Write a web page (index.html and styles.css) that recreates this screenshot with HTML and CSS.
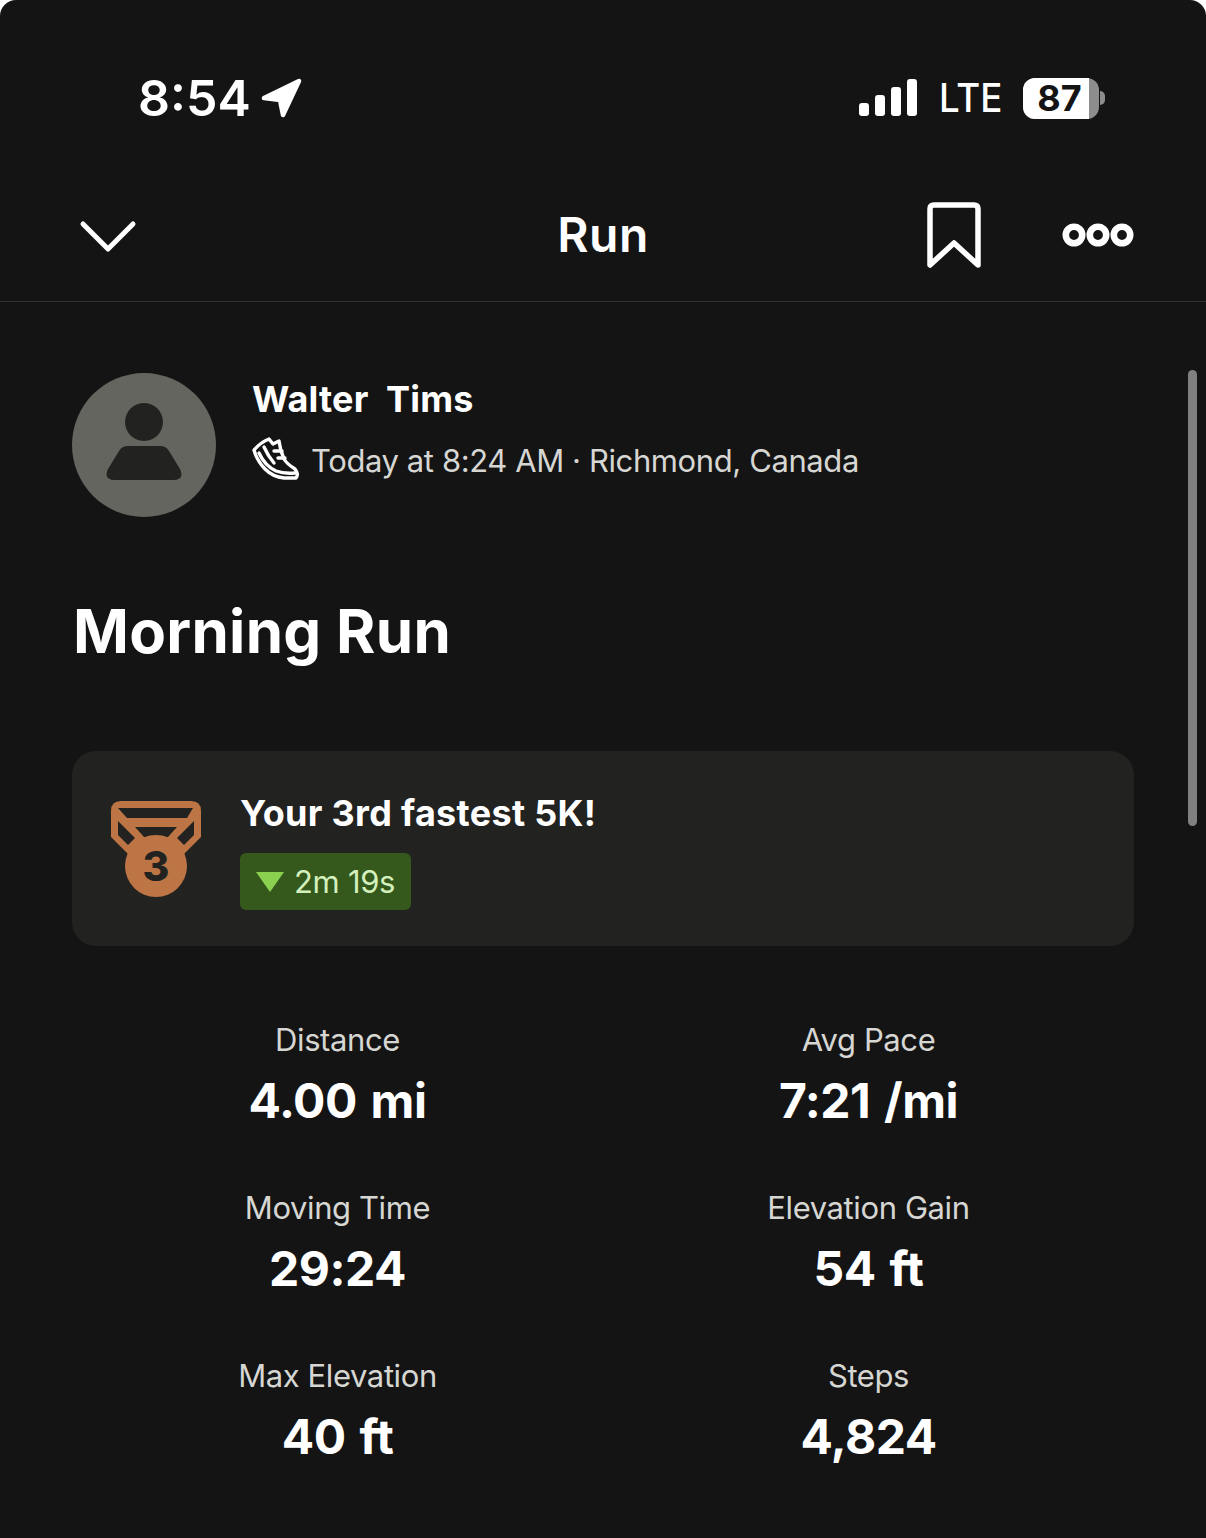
FILE: index.html
```html
<!DOCTYPE html>
<html lang="en">
<head>
<meta charset="utf-8">
<title>Run</title>
<link rel="stylesheet" href="styles.css">
</head>
<body>
<div class="phone">
  <header class="status">
    <div class="status-left">
      <span class="clock">8:54</span>
      <svg class="loc" width="42" height="40" viewBox="0 0 42 40"><path d="M3 20 38 3 22 37 19 22Z" fill="#fff" stroke="#fff" stroke-width="4.5" stroke-linejoin="round"/></svg>
    </div>
    <div class="status-right">
      <div class="signal"><i class="s1"></i><i class="s2"></i><i class="s3"></i><i class="s4"></i></div>
      <span class="lte">LTE</span>
      <div class="battery">
        <div class="batt-body"><span class="batt-num">87</span></div>
        <span class="batt-cap"></span>
      </div>
    </div>
  </header>
  <nav class="nav">
    <svg class="chev" width="58" height="34" viewBox="0 0 58 34"><path d="M4 4 29 29 54 4" fill="none" stroke="#fff" stroke-width="5" stroke-linecap="round" stroke-linejoin="round"/></svg>
    <h1 class="nav-title">Run</h1>
    <div class="nav-actions">
      <svg class="mark" width="54" height="66" viewBox="0 0 54 66"><path d="M3 63V7Q3 3 7 3H47Q51 3 51 7V63L27 41Z" fill="none" stroke="#fff" stroke-width="5.5" stroke-linejoin="round"/></svg>
      <svg class="more" width="72" height="24" viewBox="0 0 72 24"><g fill="none" stroke="#fff" stroke-width="6.6"><circle cx="12" cy="12" r="8.2"/><circle cx="36" cy="12" r="8.2"/><circle cx="60" cy="12" r="8.2"/></g></svg>
    </div>
  </nav>
  <main class="content">
    <section class="profile">
      <div class="avatar">
        <svg width="76" height="78" viewBox="0 0 76 78"><circle cx="38" cy="19" r="19" fill="#222220"/><path d="M22 43H54Q60 43 63 48L74 66Q79 77 67 77H9Q-3 77 2 66L13 48Q16 43 22 43Z" fill="#222220"/></svg>
      </div>
      <div class="who">
        <div class="name">Walter&nbsp; Tims</div>
        <div class="meta">
          <svg class="shoe" width="48" height="46" viewBox="0 0 48 46"><g fill="none" stroke="#fff" stroke-width="3.4" stroke-linecap="round" stroke-linejoin="round"><path d="M3 14Q10 6 18 3L22 8 28 5Q29 14 33 23 36 28 44 33 48 38 45 42H33Q22 41 14 33 6 25 3 14Z"/><path d="M8 17Q14 30 25 35 33 38 44 37"/><path d="M13 11Q17 20 23 27M23 15H31M27 22H34"/></g></svg>
          <span class="meta-text">Today at 8:24 AM · Richmond, Canada</span>
        </div>
      </div>
    </section>
    <h2 class="title">Morning Run</h2>
    <section class="card">
      <svg class="medal" width="90" height="98" viewBox="0 0 90 98"><path d="M10 0H80Q90 0 90 10V36L70 56H20L0 36V10Q0 0 10 0Z" fill="#bd7546"/><path d="M7 7H82L76 17H16Z" fill="#222220"/><path d="M24 26H66L57 36H33Z" fill="#222220"/><path d="M7 20 24 37 17 44 7 34Z" fill="#222220"/><path d="M83 20 66 37 73 44 83 34Z" fill="#222220"/><circle cx="45" cy="65" r="31" fill="#bd7546"/><text class="medal-num" x="45" y="79.5" text-anchor="middle">3</text></svg>
      <div class="card-body">
        <div class="card-title">Your 3rd fastest 5K!</div>
        <div class="pill"><span class="tri"></span><span>2m 19s</span></div>
      </div>
    </section>
    <section class="stats">
      <div class="stat"><div class="label">Distance</div><div class="value">4.00 mi</div></div>
      <div class="stat"><div class="label">Avg Pace</div><div class="value">7:21 /mi</div></div>
      <div class="stat"><div class="label">Moving Time</div><div class="value">29:24</div></div>
      <div class="stat"><div class="label">Elevation Gain</div><div class="value">54 ft</div></div>
      <div class="stat"><div class="label">Max Elevation</div><div class="value">40 ft</div></div>
      <div class="stat"><div class="label">Steps</div><div class="value">4,824</div></div>
    </section>
  </main>
  <div class="scrollbar"></div>
</div>
</body>
</html>
```
FILE: styles.css
```css
* { box-sizing: border-box; }
html, body { margin: 0; padding: 0; background: #fff; }
body { width: 1206px; height: 1538px; overflow: hidden; font-family: "Inter", "Noto Sans", sans-serif; color: #fff; }
.phone { position: relative; width: 1206px; height: 1538px; background: #141414; border-radius: 16px 16px 0 0; overflow: hidden; }
.status { height: 170px; padding: 68px 101px 0 138px; display: flex; justify-content: space-between; align-items: flex-start; }
.status-left { display: flex; align-items: center; gap: 10px; height: 60px; }
.clock { font-size: 50px; font-weight: 600; line-height: 60px; }
.status-right { display: flex; align-items: center; height: 60px; }
.signal { display: flex; align-items: flex-end; gap: 6px; height: 38px; margin-right: 22px; margin-top: -2px; }
.signal i { width: 10px; background: #fff; border-radius: 3px; display: block; }
.s1 { height: 13px; } .s2 { height: 21px; } .s3 { height: 29px; } .s4 { height: 37px; }
.lte { font-size: 39px; font-weight: 500; line-height: 60px; margin-right: 22px; transform: scaleX(0.94); transform-origin: left; width: 61px; }
.battery { display: flex; align-items: center; }
.batt-body { width: 76px; height: 41px; border-radius: 12px; display: flex; background: #8d8d8d; margin-left: 1px; }
.batt-num { width: 66px; height: 41px; border-radius: 12px 0 0 12px; background: #fff; color: #141414; font-size: 36px; font-weight: 700; line-height: 41px; text-align: center; padding-left: 7px; }
.batt-cap { width: 5px; height: 14px; margin-left: 1px; background: #8d8d8d; border-radius: 0 5px 5px 0; }
.nav { height: 132px; border-bottom: 1px solid #333; position: relative; display: flex; align-items: center; justify-content: space-between; padding: 0 72px 0 79px; }
.chev { margin-top: 2px; }
.nav-title { position: absolute; left: 0; right: 0; top: 35px; margin: 0; text-align: center; font-size: 48px; letter-spacing: 0.5px; line-height: 60px; font-weight: 600; }
.nav-actions { display: flex; align-items: center; gap: 81px; margin-top: -2px; }
.content { padding: 71px 72px 0; }
.profile { display: flex; gap: 36px; align-items: flex-start; }
.avatar { width: 144px; height: 144px; border-radius: 50%; background: #656560; display: flex; align-items: center; justify-content: center; padding-bottom: 7px; }
.who { padding-top: 2px; }
.name { font-size: 36px; font-weight: 700; letter-spacing: 0.2px; line-height: 48px; }
.meta { display: flex; align-items: center; gap: 12px; margin-top: 12px; }
.shoe { margin-top: -2px; margin-left: -1px; }
.meta-text { font-size: 31px; letter-spacing: -0.4px; line-height: 48px; color: #d6d6d3; font-weight: 400; padding-top: 2px; }
.title { margin: 72px 0 0; padding-left: 1px; font-size: 60px; letter-spacing: 0.3px; line-height: 84px; font-weight: 700; }
.card { margin-top: 78px; height: 195px; border-radius: 24px; background: #222220; display: flex; align-items: flex-start; padding: 50px 0 0 39px; gap: 39px; }
.medal-num { font-family: "Inter", sans-serif; font-size: 41px; font-weight: 800; fill: #222220; }
.card-body { margin-top: -12px; }
.card-title { font-size: 36px; letter-spacing: 0.3px; line-height: 48px; font-weight: 700; }
.pill { margin-top: 16px; width: 171px; height: 57px; border-radius: 6px; background: #35581d; color: #d4f1bd; font-size: 31px; letter-spacing: -0.3px; display: flex; align-items: center; padding-left: 16px; gap: 10px; }
.tri { width: 0; height: 0; border-left: 14px solid transparent; border-right: 14px solid transparent; border-top: 20px solid #8ad14f; }
.stats { display: grid; grid-template-columns: 531px 531px; margin-top: 68px; row-gap: 28px; }
.stat { text-align: center; height: 140px; }
.label { font-size: 31px; letter-spacing: -0.4px; line-height: 52px; color: #d6d6d3; }
.value { font-size: 48px; letter-spacing: -0.5px; word-spacing: 3px; line-height: 70px; font-weight: 700; }
.scrollbar { position: absolute; left: 1188px; top: 370px; width: 9px; height: 456px; border-radius: 5px; background: #808080; }
```
